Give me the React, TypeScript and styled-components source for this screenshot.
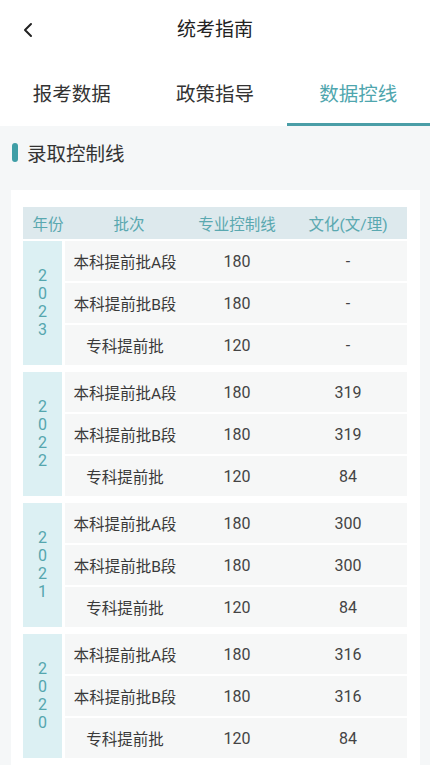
import React from 'react';
import styled, {createGlobalStyle} from 'styled-components';

const teal = '#3f9ea6';

const GlobalStyle = createGlobalStyle`
    html, body {
        margin: 0;
        padding: 0;
        background: #f5f7f8;
        font-family: Roboto, "Noto Sans CJK SC", sans-serif;
        color: #333;
    }
    * { box-sizing: border-box; }
`

const Page = styled.div`
    width: 430px;
    height: 765px;
    overflow: hidden;
`

const Top = styled.div`
    background: #fff;
`

const NavBar = styled.div`
    position: relative;
    height: 60px;
    display: flex;
    align-items: center;
    justify-content: center;
`

const Back = styled.div`
    position: absolute;
    left: 18px;
    top: 20px;
    width: 20px;
    height: 20px;
    display: flex;
    align-items: center;
    justify-content: center;
`

const Title = styled.h1`
    margin: 0;
    font-size: 19px;
    font-weight: 400;
    color: #222;
    line-height: 24px;
`

const Tabs = styled.div`
    display: grid;
    grid-template-columns: repeat(3, 1fr);
    height: 66px;
`

const Tab = styled.div<{ active?: boolean }>`
    display: flex;
    align-items: center;
    justify-content: center;
    padding-top: 2px;
    font-size: 19.5px;
    color: ${p => p.active ? '#4fa6ae' : '#333'};
    border-bottom: 3px solid ${p => p.active ? '#4a9ea7' : 'transparent'};
`

const SectionTitle = styled.div`
    display: flex;
    align-items: center;
    gap: 9px;
    padding: 4px 12px 0;
    height: 48px;
    font-size: 19.5px;
    color: #333;
`

const Bar = styled.span`
    width: 6px;
    height: 19px;
    border-radius: 3px;
    background: ${teal};
`

const Card = styled.div`
    margin: 16px 10px 0 11px;
    background: #fff;
    padding: 17px 13px 0 12px;
    height: 600px;
`

const HeadRow = styled.div`
    display: grid;
    grid-template-columns: 50px 112px 104px 1fr;
    height: 32px;
    align-items: center;
    background: #dde9ed;
    color: #5aa8b0;
    font-size: 15.5px;
    text-align: center;
    margin-bottom: 2px;
`

const Group = styled.div`
    display: flex;
    gap: 3px;
    margin-bottom: 7px;
`

const YearCell = styled.div`
    width: 39px;
    background: #dcf0f3;
    display: flex;
    flex-direction: column;
    align-items: center;
    justify-content: center;
    color: #55a6ae;
    font-size: 16px;
`

const Digit = styled.span`
    display: block;
    height: 18px;
    line-height: 18px;
`

const Rows = styled.div`
    flex: 1;
    display: flex;
    flex-direction: column;
    gap: 2px;
`

const Row = styled.div`
    display: grid;
    grid-template-columns: 120px 104px 1fr;
    height: 40px;
    align-items: center;
    background: #f6f7f7;
    text-align: center;
    font-size: 15.5px;
    color: #333;
`

const Batch = styled.span`
    font-size: 15.5px;
    color: #3a3a3a;
`

const Num = styled.span`
    font-size: 16px;
    color: #444;
`

const years = [
    {year: '2023', scores: ['-', '-', '-']},
    {year: '2022', scores: ['319', '319', '84']},
    {year: '2021', scores: ['300', '300', '84']},
    {year: '2020', scores: ['316', '316', '84']},
];

const batches = [
    {name: '本科提前批A段', line: '180'},
    {name: '本科提前批B段', line: '180'},
    {name: '专科提前批', line: '120'},
];

const App = () => {
    return (
        <Page>
            <GlobalStyle />
            <Top>
                <NavBar>
                    <Back>
                        <svg width="12" height="16" viewBox="0 0 12 16">
                            <path d="M9 2 L3 8 L9 14" fill="none" stroke="#222" strokeWidth="2" strokeLinecap="round" strokeLinejoin="round" />
                        </svg>
                    </Back>
                    <Title>统考指南</Title>
                </NavBar>
                <Tabs>
                    <Tab>报考数据</Tab>
                    <Tab>政策指导</Tab>
                    <Tab active>数据控线</Tab>
                </Tabs>
            </Top>
            <SectionTitle>
                <Bar />
                录取控制线
            </SectionTitle>
            <Card>
                <HeadRow>
                    <span>年份</span>
                    <span>批次</span>
                    <span>专业控制线</span>
                    <span>文化(文/理)</span>
                </HeadRow>
                {years.map(y => (
                    <Group key={y.year}>
                        <YearCell>
                            {y.year.split('').map((d, i) => <Digit key={i}>{d}</Digit>)}
                        </YearCell>
                        <Rows>
                            {batches.map((b, i) => (
                                <Row key={b.name}>
                                    <Batch>{b.name}</Batch>
                                    <Num>{b.line}</Num>
                                    <Num>{y.scores[i]}</Num>
                                </Row>
                            ))}
                        </Rows>
                    </Group>
                ))}
            </Card>
        </Page>
    );
};

export default App;
